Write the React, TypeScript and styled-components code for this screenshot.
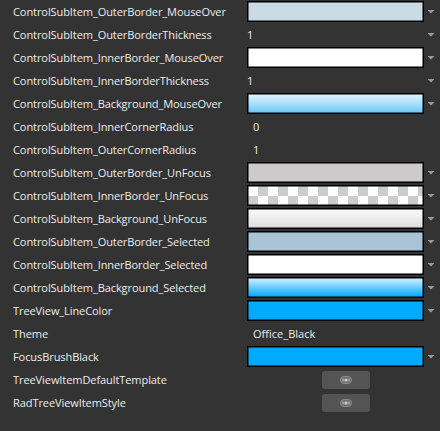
import React from "react"
import styled, { createGlobalStyle, css } from "styled-components"

const GlobalStyle = createGlobalStyle`
  html, body {
    margin: 0;
    padding: 0;
    background: #333333;
  }
  body {
    font-family: "Segoe UI", "Open Sans", "Noto Sans", sans-serif;
    font-size: 11px;
    color: #ececec;
  }
`

const Grid = styled.div`
  width: 440px;
  height: 431px;
  background: #333333;
  display: flex;
  flex-direction: column;
`

const Row = styled.div`
  height: 23px;
  display: grid;
  grid-template-columns: 247px 177px 16px;
  align-items: center;
`

const Label = styled.div`
  padding-left: 13px;
  white-space: nowrap;
  font-size: 11.05px;
  letter-spacing: -0.1px;
`

type SwatchProps = { $fill: string; $checker?: boolean }

const Swatch = styled.div<SwatchProps>`
  height: 21px;
  box-sizing: border-box;
  border: 1px solid #000;
  box-shadow: inset 0 0 0 0.5px #000;
  background: ${(p) => p.$fill};
  ${(p) =>
    p.$checker &&
    css`
      background-color: #ffffff;
      background-image: conic-gradient(#cccccc 25%, #ffffff 0 50%, #cccccc 0 75%, #ffffff 0);
      background-size: 20px 20px;
      background-position: 0 0;
    `}
`

const Value = styled.div<{ $indent?: boolean }>`
  padding-left: ${(p) => (p.$indent ? "6px" : "0")};
  font-size: 11.05px;
`

const ArrowCell = styled.div`
  display: flex;
  align-items: center;
  padding-left: 4px;
  height: 100%;
`

const ButtonCell = styled.div`
  display: flex;
  padding-left: 75px;
`

const ResourceButton = styled.div`
  width: 48px;
  height: 18px;
  border-radius: 3px;
  background: #545454;
  display: flex;
  align-items: center;
  justify-content: center;
`

const DropArrow = () => (
  <svg width="6" height="4" viewBox="0 0 6 4">
    <rect x="0" y="0" width="6" height="1" fill="#9a9a9a" />
    <path d="M0.5 1 L5.5 1 L3 3.5 Z" fill="#9a9a9a" />
  </svg>
)

const LinkGlyph = () => (
  <svg width="12" height="8" viewBox="0 0 12 8">
    <rect x="0.5" y="0.5" width="11" height="7" rx="3.5" fill="#6e6e6e" stroke="#8a8a8a" strokeWidth="1" />
    <circle cx="6" cy="4" r="1.6" fill="#d0d0d0" />
    <rect x="2.5" y="2.5" width="1" height="3" fill="#bdbdbd" />
    <rect x="8.5" y="2.5" width="1" height="3" fill="#bdbdbd" />
  </svg>
)

type Item =
  | { name: string; kind: "color"; fill: string; checker?: boolean }
  | { name: string; kind: "number"; value: string; arrow: boolean }
  | { name: string; kind: "text"; value: string }
  | { name: string; kind: "button" }

const items: Item[] = [
  { name: "ControlSubItem_OuterBorder_MouseOver", kind: "color", fill: "#cbdbe5" },
  { name: "ControlSubItem_OuterBorderThickness", kind: "number", value: "1", arrow: true },
  { name: "ControlSubItem_InnerBorder_MouseOver", kind: "color", fill: "#ffffff" },
  { name: "ControlSubItem_InnerBorderThickness", kind: "number", value: "1", arrow: true },
  { name: "ControlSubItem_Background_MouseOver", kind: "color", fill: "linear-gradient(to bottom, #e3f5fd 0%, #a9dffa 50%, #6ac6f7 100%)" },
  { name: "ControlSubItem_InnerCornerRadius", kind: "number", value: "0", arrow: false },
  { name: "ControlSubItem_OuterCornerRadius", kind: "number", value: "1", arrow: false },
  { name: "ControlSubItem_OuterBorder_UnFocus", kind: "color", fill: "#cccbc9" },
  { name: "ControlSubItem_InnerBorder_UnFocus", kind: "color", fill: "#fff", checker: true },
  { name: "ControlSubItem_Background_UnFocus", kind: "color", fill: "linear-gradient(to bottom, #fafafa 0%, #ededed 50%, #dcdcdc 100%)" },
  { name: "ControlSubItem_OuterBorder_Selected", kind: "color", fill: "#a8c4d6" },
  { name: "ControlSubItem_InnerBorder_Selected", kind: "color", fill: "#ffffff" },
  { name: "ControlSubItem_Background_Selected", kind: "color", fill: "linear-gradient(to bottom, #d4f1ff 0%, #5cc8ff 55%, #00a8fb 100%)" },
  { name: "TreeView_LineColor", kind: "color", fill: "#00aaff" },
  { name: "Theme", kind: "text", value: "Office_Black" },
  { name: "FocusBrushBlack", kind: "color", fill: "#00aaff" },
  { name: "TreeViewItemDefaultTemplate", kind: "button" },
  { name: "RadTreeViewItemStyle", kind: "button" },
]

const PropertyRow: React.FC<{ item: Item }> = ({ item }) => {
  if (item.kind === "color") {
    return (
      <Row>
        <Label>{item.name}</Label>
        <Swatch $fill={item.fill} $checker={item.checker} />
        <ArrowCell>
          <DropArrow />
        </ArrowCell>
      </Row>
    )
  }
  if (item.kind === "number") {
    return (
      <Row>
        <Label>{item.name}</Label>
        <Value $indent={!item.arrow}>{item.value}</Value>
        <ArrowCell>{item.arrow && <DropArrow />}</ArrowCell>
      </Row>
    )
  }
  if (item.kind === "text") {
    return (
      <Row>
        <Label>{item.name}</Label>
        <Value $indent>{item.value}</Value>
        <ArrowCell />
      </Row>
    )
  }
  return (
    <Row>
      <Label>{item.name}</Label>
      <ButtonCell>
        <ResourceButton>
          <LinkGlyph />
        </ResourceButton>
      </ButtonCell>
      <ArrowCell />
    </Row>
  )
}

const App = () => (
  <>
    <GlobalStyle />
    <Grid>
      {items.map((item) => (
        <PropertyRow key={item.name} item={item} />
      ))}
    </Grid>
  </>
)

export default App
